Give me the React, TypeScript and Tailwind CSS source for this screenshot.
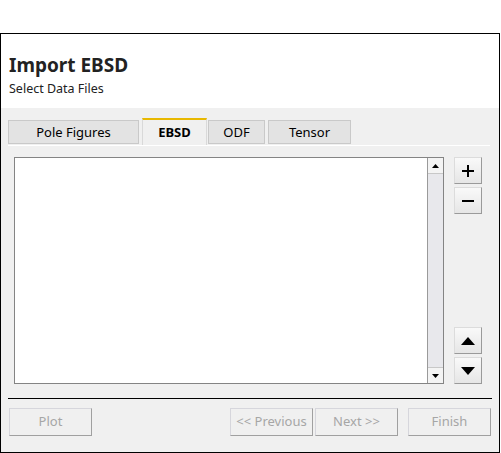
const tabs = ["Pole Figures", "EBSD", "ODF", "Tensor"];

const Tab = ({ label, active }: { label: string; active?: boolean }) => {
  if (active) {
    return (
      <div className="h-[27px] px-[15px] pt-[1px] flex items-center justify-center bg-[#f0f0f0] border-t-2 border-t-[#e8b800] border-x border-x-[#d9d9d9] text-[13px] font-bold text-black">
        {label}
      </div>
    );
  }
  return (
    <div className="h-[24px] mb-[1px] pt-[2px] flex items-center justify-center bg-[#e3e3e3] border border-[#c9c9c9] text-[13px] text-black">
      {label}
    </div>
  );
};

const SideButton = ({ children }: { children: React.ReactNode }) => (
  <button className="w-[28px] h-[27px] flex items-center justify-center bg-gradient-to-b from-[#f9f9f9] to-[#e6e6e6] border border-[#dcdcdc] border-r-[#9a9a9a] border-b-[#9a9a9a]">
    {children}
  </button>
);

const NavButton = ({ label, w }: { label: string; w: string }) => (
  <button
    className={`${w} h-[28px] flex items-center justify-center bg-[#f0f0f0] border border-[#d6d6dc] border-r-[#a0a0a0] border-b-[#a0a0a0] text-[13px] text-[#a6a6a6]`}
  >
    {label}
  </button>
);

export default function App() {
  return (
    <div className="w-[501px] h-[453px] bg-white font-['Noto_Sans',sans-serif]">
      <div className="h-[33px]" />
      <div className="w-[500px] h-[420px] border border-black flex flex-col">
        <div className="h-[74px] bg-white px-[8px] pt-[19px]">
          <div className="text-[19px] leading-[24px] font-bold text-[#222]">Import EBSD</div>
          <div className="text-[12.5px] leading-[16px] mt-[4px] text-[#222]">Select Data Files</div>
        </div>
        <div className="flex-1 bg-[#f0f0f0] flex flex-col px-[7px] pt-[10px]">
          <div className="flex items-end h-[27px] w-[482px] relative">
            <div className="w-[131px]"><Tab label={tabs[0]} /></div>
            <div className="w-[65px] ml-[3px]"><Tab label={tabs[1]} active /></div>
            <div className="w-[57px] ml-[1px]"><Tab label={tabs[2]} /></div>
            <div className="w-[83px] ml-[3px]"><Tab label={tabs[3]} /></div>
          </div>
          <div className="w-[482px] h-[1px] bg-white" />
          <div className="flex pl-[6px] pt-[11px]">
            <div className="w-[430px] h-[227px] bg-white border border-[#848484] flex justify-end">
              <div className="w-[16px] h-full bg-[#e8e8ec] border-l border-[#9a9a9a] flex flex-col justify-between">
                <div className="h-[16px] bg-[#f4f4f4] border-b border-[#c8c8c8] flex items-center justify-center">
                  <svg width="7" height="4" viewBox="0 0 7 4"><path d="M0 4 L3.5 0 L7 4 Z" fill="#000" /></svg>
                </div>
                <div className="h-[16px] bg-[#f4f4f4] border-t border-[#c8c8c8] flex items-center justify-center">
                  <svg width="7" height="4" viewBox="0 0 7 4"><path d="M0 0 L3.5 4 L7 0 Z" fill="#000" /></svg>
                </div>
              </div>
            </div>
            <div className="ml-[10px] h-[227px] flex flex-col justify-between">
              <div className="flex flex-col gap-[3px]">
                <SideButton>
                  <svg width="12" height="12" viewBox="0 0 12 12"><path d="M5 0h2v5h5v2H7v5H5V7H0V5h5z" fill="#000" /></svg>
                </SideButton>
                <SideButton>
                  <svg width="12" height="12" viewBox="0 0 12 12"><path d="M0 5h12v2H0z" fill="#000" /></svg>
                </SideButton>
              </div>
              <div className="flex flex-col gap-[3px]">
                <SideButton>
                  <svg width="14" height="8" viewBox="0 0 14 8"><path d="M0 8 L7 0 L14 8 Z" fill="#000" /></svg>
                </SideButton>
                <SideButton>
                  <svg width="14" height="8" viewBox="0 0 14 8"><path d="M0 0 L7 8 L14 0 Z" fill="#000" /></svg>
                </SideButton>
              </div>
            </div>
          </div>
          <div className="mt-[14px] w-[484px] h-[1px] bg-black" />
          <div className="mt-[9px] flex pl-[1px]">
            <NavButton label="Plot" w="w-[83px]" />
            <NavButton label="<< Previous" w="w-[83px] ml-[138px]" />
            <NavButton label="Next >>" w="w-[83px] ml-[2px]" />
            <NavButton label="Finish" w="w-[83px] ml-[10px]" />
          </div>
        </div>
      </div>
    </div>
  );
}
